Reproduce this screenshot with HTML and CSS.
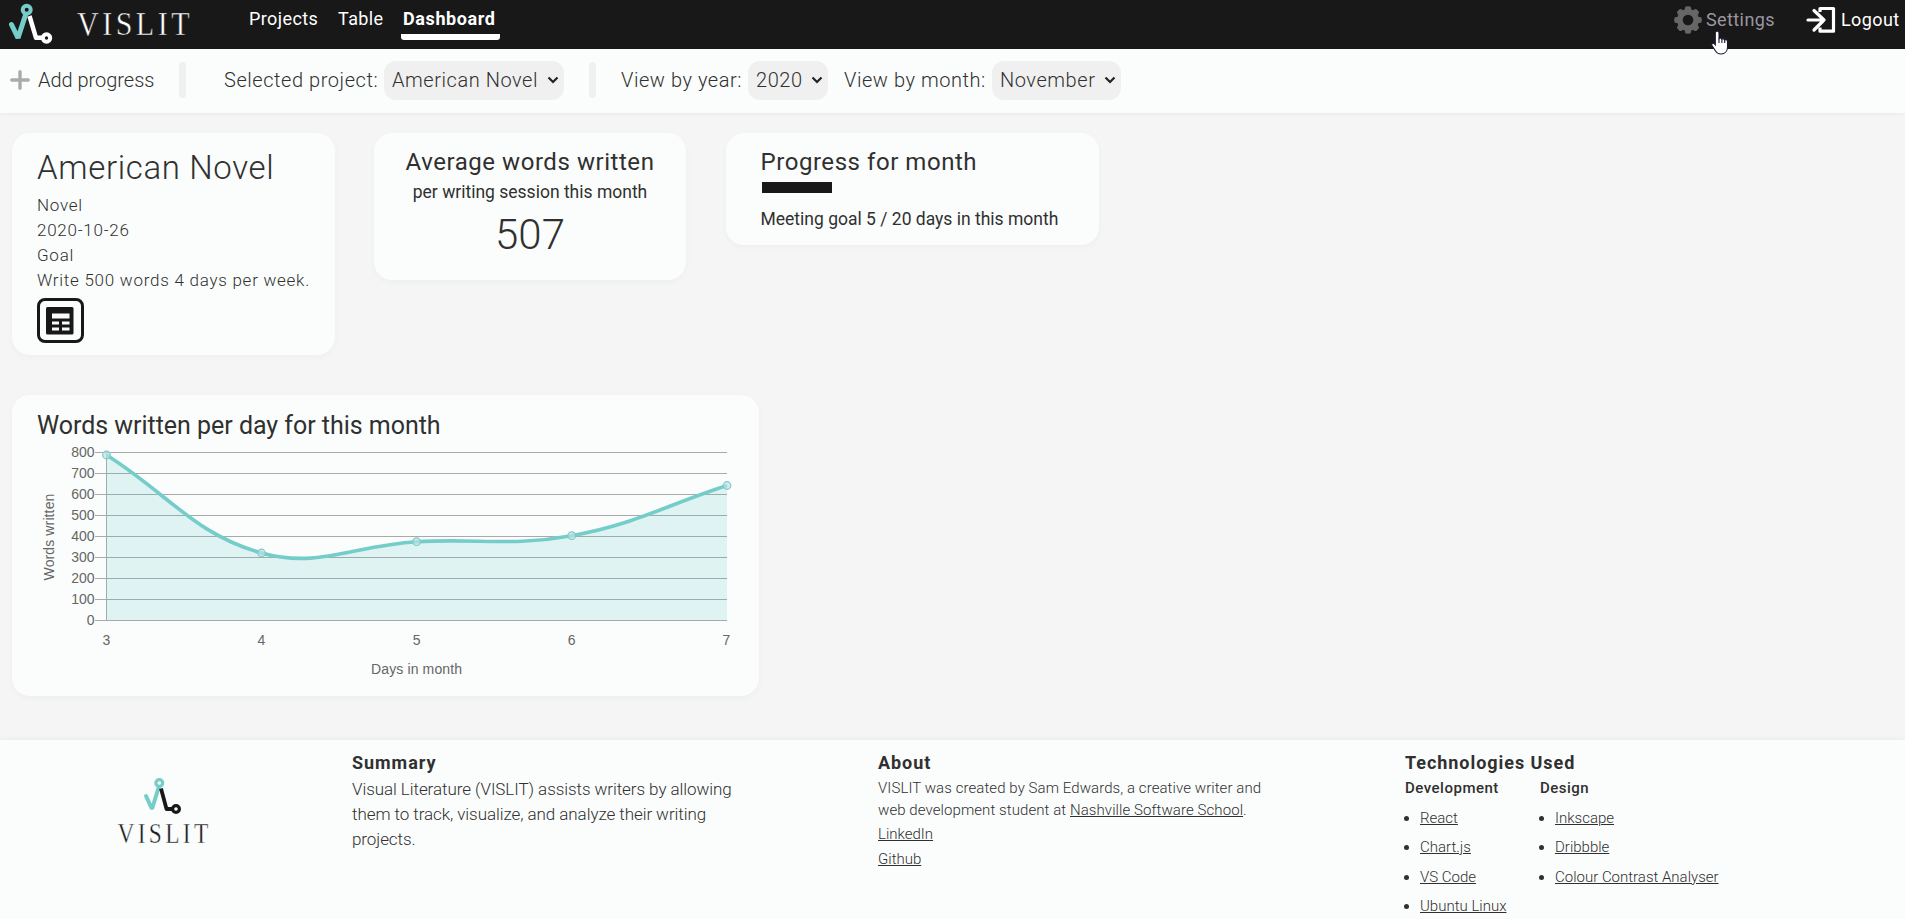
FILE: index.html
```html
<!DOCTYPE html>
<html lang="en">
<head>
<meta charset="utf-8">
<title>VISLIT</title>
<link rel="stylesheet" href="styles.css">
</head>
<body>
<nav class="nav">
  <svg class="nav-logo" width="200" height="49" viewBox="0 0 200 49">
    <g fill="none" stroke-linejoin="round">
      <path d="M11.5 24.5 18 38 25.5 15" stroke="#75cdca" stroke-width="5" stroke-linecap="round" stroke-linejoin="bevel"/>
      <circle cx="26.7" cy="9.8" r="4" stroke="#75cdca" stroke-width="4"/>
      <path d="M29.5 16 36 37.8H43" stroke="#fff" stroke-width="4.5"/>
      <circle cx="46.5" cy="38" r="3.7" stroke="#fff" stroke-width="4"/>
    </g>
    <text class="wordmark" x="77" y="35.2" font-size="34.5" fill="#fff" stroke="#181818" stroke-width=".5" textLength="116" lengthAdjust="spacingAndGlyphs">VISLIT</text>
  </svg>
  <div class="nav-links">
    <a class="nav-link projects">Projects</a>
    <a class="nav-link table">Table</a>
    <a class="nav-link active">Dashboard</a>
  </div>
  <div class="nav-user">
    <a class="user-link settings">
      <svg width="28" height="28" viewBox="-14 -14 28 28"><g fill="#666"><circle r="11"/><rect x="-3.1" y="-13.8" width="6.2" height="27.6" rx="2"/><rect x="-13.8" y="-3.1" width="27.6" height="6.2" rx="2"/><g transform="rotate(45)"><rect x="-3.1" y="-13.6" width="6.2" height="27.2" rx="2"/><rect x="-13.6" y="-3.1" width="27.2" height="6.2" rx="2"/></g></g><circle r="5.3" fill="#181818"/></svg>
      <span class="settings-text">Settings</span>
      <svg class="cursor" width="20" height="26" viewBox="0 0 20 26"><path d="M5 1.5c1.5-1 3 0 3 1.500V8.500c1-.8 2.500-.4 2.800.6 1-.6 2.400-.2 2.700.8 1.200-.6 3 0 3 1.600V17c0 4-2.500 7-6.500 7-3 0-4.500-1.200-6-3.800L1 15.500c-1-1.800 1-3 2.300-1.800L4.300 15V2.500z" fill="#fff" stroke="#181830" stroke-width="1.100"/><path d="M8 8.500V13M10.900 9V13M13.700 10V13" stroke="#181830" stroke-width="1.100"/></svg>
    </a>
    <a class="user-link logout">
      <svg width="29" height="28" viewBox="0 0 29 28"><path d="M13 6V2.500H26.500V25.200H13V21.500" fill="none" stroke="#fff" stroke-width="3.200" stroke-linejoin="round"/><path d="M1 14H17M7 4.500 17 14 7 24" fill="none" stroke="#fff" stroke-width="3.200" stroke-linejoin="round" stroke-linecap="round"/></svg>
      <span class="logout-text">Logout</span>
    </a>
  </div>
</nav>

<div class="toolbar">
  <svg class="plus" width="20" height="20" viewBox="0 0 20 20"><path d="M10 1.800V18.200M1.800 10H18.200" stroke="#aaa" stroke-width="3.400" stroke-linecap="round"/></svg>
  <span class="add">Add progress</span>
  <i class="divider"></i>
  <span class="label project-label">Selected project:</span>
  <span class="select project-select"><span>American Novel</span><svg width="12" height="8" viewBox="0 0 12 8"><path d="M1.500 1.500 6 6 10.500 1.500" fill="none" stroke="#222" stroke-width="2.200"/></svg></span>
  <i class="divider second"></i>
  <span class="label year-label">View by year:</span>
  <span class="select year-select"><span>2020</span><svg width="12" height="8" viewBox="0 0 12 8"><path d="M1.500 1.500 6 6 10.500 1.500" fill="none" stroke="#222" stroke-width="2.200"/></svg></span>
  <span class="label month-label">View by month:</span>
  <span class="select month-select"><span>November</span><svg width="12" height="8" viewBox="0 0 12 8"><path d="M1.500 1.500 6 6 10.500 1.500" fill="none" stroke="#222" stroke-width="2.200"/></svg></span>
</div>

<main class="main">
  <div class="cards">
    <section class="card project">
      <h1>American Novel</h1>
      <p>Novel</p>
      <p>2020-10-26</p>
      <p>Goal</p>
      <p class="goal">Write 500 words 4 days per week.</p>
      <div class="table-button"><svg width="28" height="28" viewBox="0 0 28 28"><rect width="27.500" height="27.500" rx="1.500" fill="#181818"/><path d="M6 6.500H23.500V11.500H6zM6 14.500H13V17.500H6zM16 14.500H23.500V17.500H16zM6 20.500H13V23.500H6zM16 20.500H23.500V23.500H16z" fill="#fbfdfc"/></svg></div>
    </section>
    <section class="card average">
      <h2>Average words written</h2>
      <p>per writing session this month</p>
      <div class="number">507</div>
    </section>
    <section class="card progress">
      <h2>Progress for month</h2>
      <div class="bar"></div>
      <p>Meeting goal 5 / 20 days in this month</p>
    </section>
  </div>
  <section class="card chart">
    <h2>Words written per day for this month</h2>
    <svg width="710" height="245" viewBox="37 445 710 245">
      <path d="M95 452.500H727M95 473.500H727M95 494.500H727M95 515.500H727M95 536.500H727M95 557.500H727M95 578.500H727M95 599.500H727M95 620.500H727M106.500 452V620" stroke="#aaaaab" fill="none"/>
      <path d="M106.500 455C168.500 494.200 194.400 534.200 261.500 553C318.400 568.900 354.500 545.200 416.600 541.700C478.500 538.200 511.200 546.700 571.700 535.700C635.400 524.200 664.900 505.600 727 485.500V620.500H106.500Z" fill="#4bc0c0" fill-opacity=".16"/>
      <path d="M106.500 455C168.500 494.200 194.400 534.200 261.500 553C318.400 568.900 354.500 545.200 416.600 541.700C478.500 538.200 511.200 546.700 571.700 535.700C635.400 524.200 664.900 505.600 727 485.500" fill="none" stroke="#75cdca" stroke-width="3.600"/>
      <g fill="#c5dfe4" fill-opacity=".65" stroke="#75cdca" stroke-width="1.200"><circle cx="106.500" cy="455" r="3.800"/><circle cx="261.500" cy="553" r="3.800"/><circle cx="416.600" cy="541.700" r="3.800"/><circle cx="571.700" cy="535.700" r="3.800"/><circle cx="727" cy="485.500" r="3.800"/></g>
      <g class="tick" text-anchor="end"><text x="94.500" y="457">800</text><text x="94.500" y="478">700</text><text x="94.500" y="499">600</text><text x="94.500" y="520">500</text><text x="94.500" y="541">400</text><text x="94.500" y="562">300</text><text x="94.500" y="583">200</text><text x="94.500" y="604">100</text><text x="94.500" y="625">0</text></g>
      <g class="tick" text-anchor="middle"><text x="106.500" y="645">3</text><text x="261.500" y="645">4</text><text x="416.600" y="645">5</text><text x="571.700" y="645">6</text><text x="726.500" y="645">7</text><text class="axis-title" x="416.600" y="674">Days in month</text><text class="axis-title" transform="translate(54 537) rotate(-90)">Words written</text></g>
    </svg>
  </section>
</main>

<footer class="footer">
  <svg class="footer-logo" width="100" height="75" viewBox="115 775 100 75">
    <g fill="none">
      <path d="M146 797 152 810 158.500 789" stroke="#75cdca" stroke-width="4" stroke-linecap="round" stroke-linejoin="bevel"/>
      <circle cx="159.300" cy="784" r="3.400" stroke="#75cdca" stroke-width="3.200"/>
      <path d="M161 789.500 166.500 810H173" stroke="#181818" stroke-width="3.800" stroke-linejoin="round"/>
      <circle cx="176" cy="810" r="3.400" stroke="#181818" stroke-width="3.200"/>
    </g>
    <text class="wordmark" x="117.500" y="844" font-size="28.500" fill="#181818" stroke="#fbfdfc" stroke-width=".4" textLength="94" lengthAdjust="spacingAndGlyphs">VISLIT</text>
  </svg>
  <section class="summary">
    <h3>Summary</h3>
    <p>Visual Literature (VISLIT) assists writers by allowing<br>them to track, visualize, and analyze their writing<br>projects.</p>
  </section>
  <section class="about">
    <h3>About</h3>
    <p>VISLIT was created by Sam Edwards, a creative writer and<br>web development student at <a>Nashville Software School</a>.</p>
    <div><a>LinkedIn</a></div>
    <div><a>Github</a></div>
  </section>
  <section class="tech">
    <h3>Technologies Used</h3>
    <div class="tech-columns">
      <div class="development"><h4>Development</h4><ul><li><a>React</a></li><li><a>Chart.js</a></li><li><a>VS Code</a></li><li><a>Ubuntu Linux</a></li></ul></div>
      <div><h4>Design</h4><ul><li><a>Inkscape</a></li><li><a>Dribbble</a></li><li><a>Colour Contrast Analyser</a></li></ul></div>
    </div>
  </section>
</footer>
</body>
</html>
```
FILE: styles.css
```css
* { box-sizing: border-box; }
h1, h2, h3, h4, p, ul { margin: 0; padding: 0; }
h1, h2 { font-weight: 400; }
body {
  margin: 0;
  height: 919px;
  overflow: hidden;
  background: #f5f5f5;
  color: #303030;
  font-family: Roboto, "Liberation Sans", sans-serif;
  white-space: nowrap;
}
svg { overflow: visible; }
.wordmark { font-family: "Liberation Serif", serif; letter-spacing: 4px; }
.nav { display: flex; height: 49px; background: #181818; color: #fff; font-size: 18px; line-height: 24px; }
.nav-logo { flex: none; margin-right: 49px; }
.nav-links { display: flex; padding-top: 7px; }
.nav-link { height: 33px; letter-spacing: .4px; }
.projects { width: 89px; }
.table { width: 63px; }
.active { width: 99px; padding-left: 2px; font-weight: 700; letter-spacing: .6px; border-bottom: 6px solid #fff; border-radius: 3px; }
.nav-user { display: flex; margin-left: auto; padding: 6px 0 0; }
.user-link { display: flex; position: relative; height: 28px; line-height: 28px; letter-spacing: .4px; }
.settings { width: 133px; gap: 4px; color: #9b95a0; }
.logout { width: 98px; gap: 5px; }
.cursor { position: absolute; left: 37px; top: 24px; }

.toolbar {
  display: flex;
  align-items: center;
  height: 64px;
  padding: 0 0 2px 10px;
  background: #fbfdfc;
  font-size: 20px;
  font-weight: 300;
  box-shadow: 0 1px 4px rgba(0, 0, 0, .05);
  letter-spacing: .55px;
}
.plus { margin-right: 8px; }
.add { width: 141px; letter-spacing: -.03px; }
.divider { width: 7px; height: 36px; border-radius: 4px; background: #f1f0f0; }
.label { flex: none; }
.project-label { width: 160px; margin-left: 38px; }
.select { display: flex; align-items: center; justify-content: space-between; height: 39px; padding: 0 5px 0 8px; border-radius: 12px; background: #f1f0f0; }
.project-select { width: 180px; }
.second { margin-left: 25px; }
.year-label { width: 127px; margin-left: 25px; }
.year-select { width: 80px; }
.month-label { width: 148px; margin-left: 16px; }
.month-select { width: 129px; }

.main { height: 627px; padding: 20px 12px 0; }
.cards { display: flex; align-items: flex-start; height: 262px; }
.card { border-radius: 18px; background: #fbfdfc; box-shadow: 0 2px 6px rgba(0, 0, 0, .03); }
.project { width: 323px; height: 222px; padding: 15px 25px; margin-right: 39px; }
.project h1 { font-size: 33px; line-height: 40px; font-weight: 300; letter-spacing: .65px; margin-bottom: 5px; }
.project p { font-size: 17px; line-height: 25px; font-weight: 300; letter-spacing: .74px; }
.table-button { display: flex; align-items: center; width: 47px; height: 45px; margin-top: 5px; padding-left: 6px; border: 3px solid #181818; border-radius: 8px; }
.average { width: 312px; height: 147px; margin-right: 40px; padding-top: 14px; text-align: center; }
.card h2 { font-size: 24px; line-height: 30px; letter-spacing: .55px; }
.average p { font-size: 17.500px; line-height: 28px; margin-top: 1px; }
.number { font-size: 42px; line-height: 50px; font-weight: 300; margin-top: 4px; }
.progress { width: 373px; height: 112px; padding: 14px 34.500px; }
.bar { width: 70px; height: 11px; margin: 5px 0 16px 1.500px; background: #181818; }
.progress p { font-size: 17.500px; line-height: 20px; }
.chart { width: 747px; height: 301px; padding: 15px 25px; }
.card.chart h2 { font-size: 25px; line-height: 32px; letter-spacing: -.03px; margin-bottom: 3px; }
.chart svg { display: block; }
.tick { font: 14px "Liberation Sans", Arial, sans-serif; fill: #666; }
.axis-title { letter-spacing: .12px; }

.footer { display: flex; height: 179px; padding-left: 115px; background: #fbfdfc; box-shadow: 0 -1px 4px rgba(0, 0, 0, .05); }
.footer-logo { flex: none; margin: 34px 137px 0 0; }
.footer section { padding-top: 11px; }
.footer h3 { font-size: 18px; line-height: 24px; font-weight: 700; letter-spacing: .95px; margin-bottom: 1px; }
.footer a { text-decoration: underline; }
.summary { width: 526px; }
.summary p { font-size: 17px; line-height: 25px; font-weight: 300; letter-spacing: -.07px; margin-top: 2px; }
.about { width: 527px; font-size: 15px; font-weight: 300; line-height: 25px; }
.about p { line-height: 22px; margin-top: 2px; letter-spacing: .08px; }
.about p + div { margin-top: 1px; }
.tech-columns { display: flex; }
.development { width: 135px; }
.tech h4 { font-size: 15px; line-height: 24px; font-weight: 500; letter-spacing: .5px; margin-bottom: 4px; }
.tech ul { padding-left: 15px; }
.tech li { font-size: 15px; line-height: 29.300px; font-weight: 300; }
```
